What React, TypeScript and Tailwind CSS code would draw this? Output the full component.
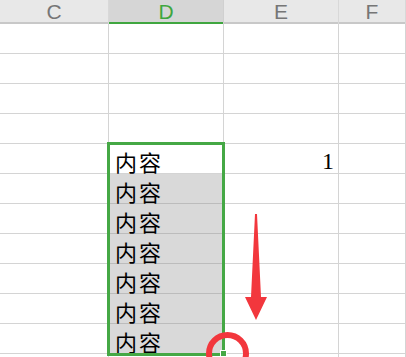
const cols = ["C", "D", "E", "F"];
const rowCount = 12;

const cellWidths = ["w-[109px]", "w-[115px]", "w-[115px]", "flex-1"];

function Cell({ col, row }: { col: number; row: number }) {
  const inSel = col === 1 && row >= 5 && row <= 11;
  const shaded = col === 1 && row >= 6 && row <= 11;
  return (
    <div
      className={`${cellWidths[col]} h-[30px] shrink-0 border-r border-b ${
        shaded ? "bg-[#d9d9d9] border-b-[#bcbcbc]" : "bg-white border-b-[#d4d4d4]"
      } border-r-[#d4d4d4] flex items-start`}
    >
      {inSel && (
        <span className="pl-[6px] pt-[6px] text-[22px] leading-[22px] tracking-[2px] text-black [font-family:'Noto_Sans_CJK_SC',sans-serif]">
          内容
        </span>
      )}
      {col === 2 && row === 5 && (
        <span className="ml-auto pr-[4px] pt-[5px] text-[24px] leading-[24px] text-black [font-family:'Liberation_Serif',serif]">
          1
        </span>
      )}
    </div>
  );
}

export default function App() {
  return (
    <div className="relative w-[406px] h-[357px] overflow-hidden bg-white">
      <div className="flex h-[24px]">
        {cols.map((c, i) => (
          <div
            key={c}
            className={`${cellWidths[i]} h-[24px] shrink-0 flex items-start justify-center border-r ${
              i === 1
                ? "bg-[#d6d6d6] shadow-[inset_0_-2px_0_#3fa63f] text-[#3fa63f] border-r-[#d0d0d0]"
                : "bg-[#e8e8e8] shadow-[inset_0_-2px_0_#c8c8c8] text-[#767676] border-r-[#d8d8d8]"
            } text-[21px] leading-[24px] [font-family:'Liberation_Sans',sans-serif]`}
          >
            {c}
          </div>
        ))}
      </div>
      {Array.from({ length: rowCount }, (_, r) => (
        <div key={r} className="flex">
          {cols.map((c, i) => (
            <Cell key={c} col={i} row={r + 1} />
          ))}
        </div>
      ))}

      {/* selection box */}
      <div className="absolute left-[107px] top-[142px] w-[118px] h-[214px] border-[3px] border-[#45a845]" />
      {/* fill handle */}
      <div className="absolute left-[220px] top-[350px] w-[7px] h-[7px] bg-[#45a845] border border-white" />

      <svg className="absolute inset-0" width="406" height="357" viewBox="0 0 406 357">
        <polygon points="255,214 257,214 261,297 267,297 256,320 245,297 251,297" fill="#f2373d" />
        <circle cx="227.5" cy="353.5" r="18.5" fill="none" stroke="#f2373d" strokeWidth="6" />
      </svg>
    </div>
  );
}
